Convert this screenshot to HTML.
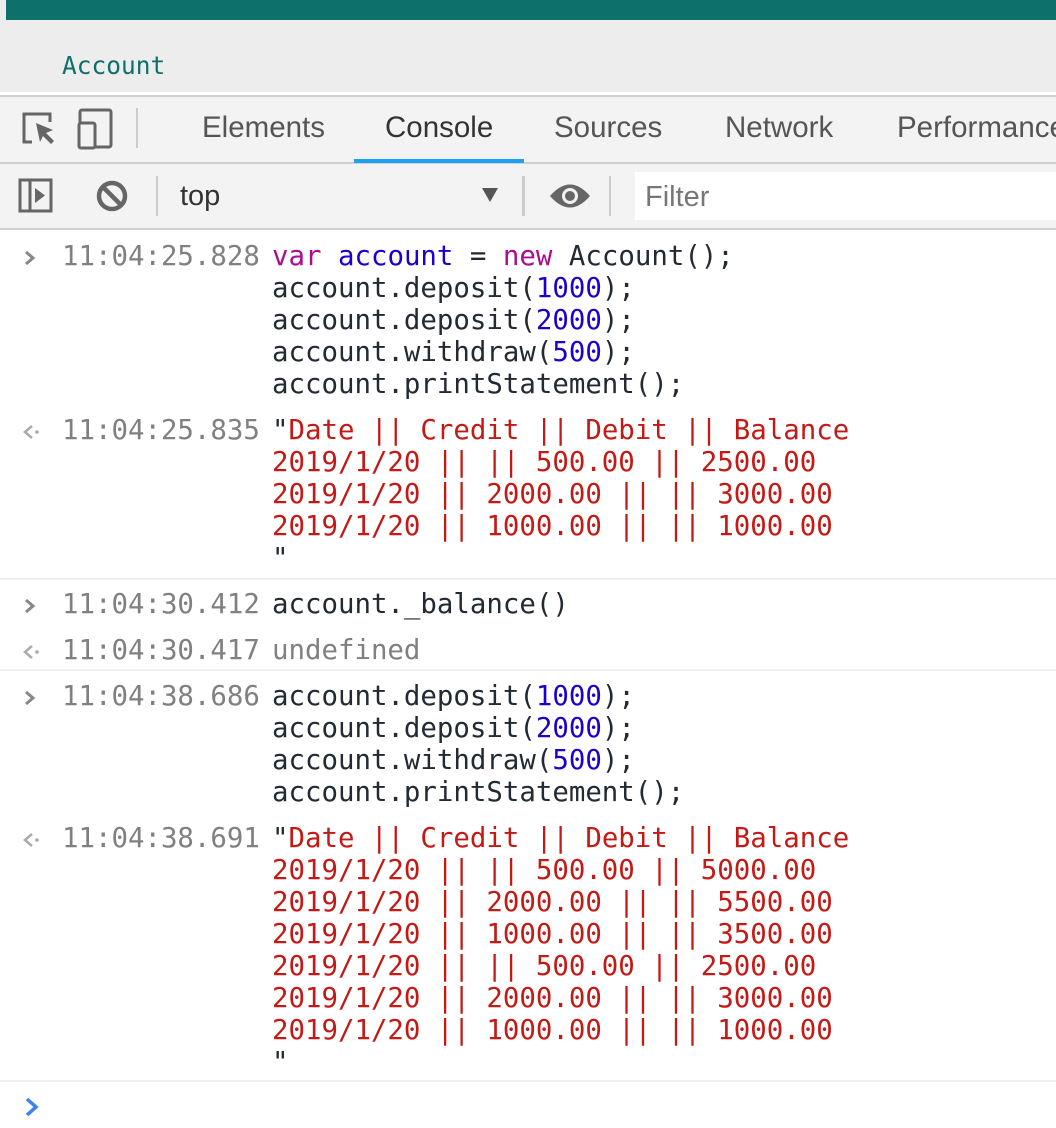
<!DOCTYPE html>
<html><head><meta charset="utf-8"><style>
*{margin:0;padding:0;box-sizing:border-box}
body{width:1056px;height:1128px;overflow:hidden;background:#fff;position:relative;font-family:"Liberation Sans",sans-serif}
.abs{position:absolute}
.m{font-family:"DejaVu Sans Mono","Liberation Mono",monospace;font-size:27.4px;line-height:32px;white-space:pre;position:absolute}
.ts{color:#808080}
.c{color:#222a33}
.r{color:#c41a16}
.b{color:#1c00cf}
.p{color:#aa0d91}
.u{color:#808080}
.sep{position:absolute;left:0;width:1056px;height:2px;background:#efefef}
.tab{position:absolute;top:111px;font-size:29.5px;color:#555}
.ar{position:absolute;left:22px}
</style></head><body>
<div class="abs" style="left:0;top:0;width:1056px;height:92px;background:#ededed"></div>
<div class="abs" style="left:6px;top:0;width:1050px;height:20px;background:#0e706a"></div>
<div class="m" style="left:62px;top:50px;font-size:24.5px;color:#0e706a">Account</div>
<div class="abs" style="left:0;top:92px;width:1056px;height:3px;background:#fff"></div>
<div class="abs" style="left:0;top:95px;width:1056px;height:2px;background:#d0d0d0"></div>
<div class="abs" style="left:0;top:97px;width:1056px;height:132px;background:#f3f3f3"></div>
<div class="abs" style="left:0;top:162px;width:1056px;height:2px;background:#d0d0d0"></div>
<div class="abs" style="left:0;top:228px;width:1056px;height:2px;background:#d0d0d0"></div>
<svg class="abs" style="left:22px;top:108px" width="110" height="42" viewBox="0 0 110 42">
<path d="M10 34 H2 V6 H28 V14" fill="none" stroke="#666" stroke-width="3"/>
<path d="M14 15 L31 22 L24 25 L32 33 L29 36 L21 28 L18 34 Z" fill="#666"/>
<rect x="58" y="2" width="31" height="37" rx="2" fill="none" stroke="#666" stroke-width="3"/>
<rect x="57" y="15" width="16" height="25" rx="2" fill="#f3f3f3" stroke="#666" stroke-width="3"/>
</svg>
<div class="abs" style="left:136px;top:108px;width:2px;height:40px;background:#ccc"></div>
<div class="tab" style="left:202px">Elements</div>
<div class="tab" style="left:385px;color:#333">Console</div>
<div class="tab" style="left:554px">Sources</div>
<div class="tab" style="left:725px">Network</div>
<div class="tab" style="left:897px">Performance</div>
<div class="abs" style="left:354px;top:159px;width:170px;height:4px;background:#1da1f2"></div>
<svg class="abs" style="left:18px;top:178px" width="120" height="38" viewBox="0 0 120 38">
<rect x="2" y="2" width="31" height="31" fill="none" stroke="#666" stroke-width="3"/>
<line x1="12" y1="2" x2="12" y2="33" stroke="#666" stroke-width="3"/>
<path d="M17 10 L27 17.5 L17 25 Z" fill="#666"/>
<circle cx="94" cy="18" r="13" fill="none" stroke="#666" stroke-width="4.5"/>
<line x1="85" y1="9" x2="103" y2="27" stroke="#666" stroke-width="4.5"/>
</svg>
<div class="abs" style="left:156px;top:176px;width:2px;height:40px;background:#ccc"></div>
<div class="abs" style="left:180px;top:180px;font-size:29px;color:#333">top</div>
<svg class="abs" style="left:482px;top:188px" width="18" height="16"><path d="M0 0 H16 L8 14 Z" fill="#555"/></svg>
<div class="abs" style="left:522px;top:176px;width:3px;height:40px;background:#ccc"></div>
<svg class="abs" style="left:548px;top:181px" width="44" height="30" viewBox="0 0 44 30"><path d="M2 15 Q22 -8 42 15 Q22 38 2 15 Z" fill="#666"/><circle cx="22" cy="15" r="8" fill="#f3f3f3"/><circle cx="22" cy="15" r="5" fill="#666"/></svg>
<div class="abs" style="left:609px;top:176px;width:2px;height:40px;background:#ccc"></div>
<div class="abs" style="left:635px;top:172px;width:421px;height:48px;background:#fff"></div>
<div class="abs" style="left:645px;top:181px;font-size:29px;color:#777">Filter</div>

<svg class="ar" style="top:249px" width="16" height="18"><path d="M4 3 L11 9 L4 15" fill="none" stroke="#888" stroke-width="3"/></svg>
<div class="m ts" style="left:62px;top:241px">11:04:25.828</div>
<div class="m c" style="left:272px;top:241px"><span class="p">var</span> <span class="b">account</span> = <span class="p">new</span> Account();
account.deposit(<span class="b">1000</span>);
account.deposit(<span class="b">2000</span>);
account.withdraw(<span class="b">500</span>);
account.printStatement();</div>
<svg class="ar" style="top:423px" width="20" height="18"><path d="M10 3 L3 9 L10 15" fill="none" stroke="#aaa" stroke-width="2.5"/><circle cx="15" cy="9" r="1.8" fill="#aaa"/></svg>
<div class="m ts" style="left:62px;top:415px">11:04:25.835</div>
<div class="m r" style="left:272px;top:415px"><span class="c">"</span>Date || Credit || Debit || Balance
2019/1/20 || || 500.00 || 2500.00
2019/1/20 || 2000.00 || || 3000.00
2019/1/20 || 1000.00 || || 1000.00
<span class="c">"</span></div>
<div class="sep" style="top:578px"></div>
<svg class="ar" style="top:597px" width="16" height="18"><path d="M4 3 L11 9 L4 15" fill="none" stroke="#888" stroke-width="3"/></svg>
<div class="m ts" style="left:62px;top:589px">11:04:30.412</div>
<div class="m c" style="left:272px;top:589px">account._balance()</div>
<svg class="ar" style="top:643px" width="20" height="18"><path d="M10 3 L3 9 L10 15" fill="none" stroke="#aaa" stroke-width="2.5"/><circle cx="15" cy="9" r="1.8" fill="#aaa"/></svg>
<div class="m ts" style="left:62px;top:635px">11:04:30.417</div>
<div class="m u" style="left:272px;top:635px">undefined</div>
<div class="sep" style="top:669px"></div>
<svg class="ar" style="top:689px" width="16" height="18"><path d="M4 3 L11 9 L4 15" fill="none" stroke="#888" stroke-width="3"/></svg>
<div class="m ts" style="left:62px;top:681px">11:04:38.686</div>
<div class="m c" style="left:272px;top:681px">account.deposit(<span class="b">1000</span>);
account.deposit(<span class="b">2000</span>);
account.withdraw(<span class="b">500</span>);
account.printStatement();</div>
<svg class="ar" style="top:831px" width="20" height="18"><path d="M10 3 L3 9 L10 15" fill="none" stroke="#aaa" stroke-width="2.5"/><circle cx="15" cy="9" r="1.8" fill="#aaa"/></svg>
<div class="m ts" style="left:62px;top:823px">11:04:38.691</div>
<div class="m r" style="left:272px;top:823px"><span class="c">"</span>Date || Credit || Debit || Balance
2019/1/20 || || 500.00 || 5000.00
2019/1/20 || 2000.00 || || 5500.00
2019/1/20 || 1000.00 || || 3500.00
2019/1/20 || || 500.00 || 2500.00
2019/1/20 || 2000.00 || || 3000.00
2019/1/20 || 1000.00 || || 1000.00
<span class="c">"</span></div>
<div class="sep" style="top:1080px"></div>
<svg class="abs" style="left:24px;top:1096px" width="16" height="22"><path d="M3 3 L12 11 L3 19" fill="none" stroke="#3b82f6" stroke-width="3.5"/></svg>
</body></html>
